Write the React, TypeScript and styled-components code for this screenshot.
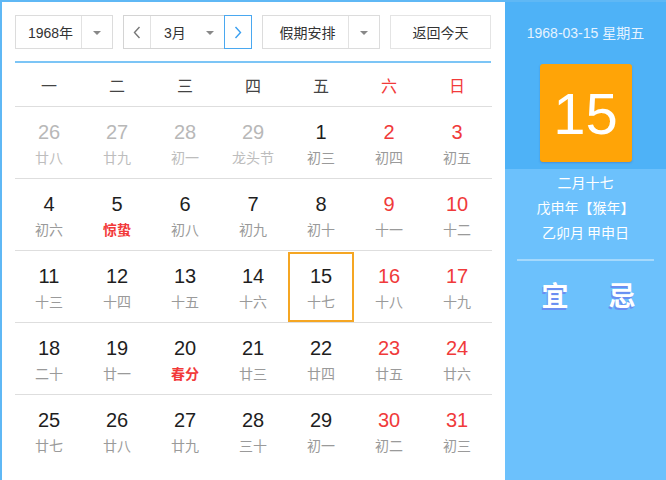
import React from 'react';
import styled, { createGlobalStyle, css } from 'styled-components';

const GlobalStyle = createGlobalStyle`
	html, body {
		margin: 0;
		padding: 0;
		background: #ffffff;
	}
	body {
		font-family: "Liberation Sans", "Noto Sans CJK SC", sans-serif;
	}
`;

type Day = {
	num: number;
	lunar: string;
	other?: boolean;
	festival?: boolean;
	selected?: boolean;
};

const weeks: Day[][] = [
	[
		{ num: 26, lunar: '廿八', other: true },
		{ num: 27, lunar: '廿九', other: true },
		{ num: 28, lunar: '初一', other: true },
		{ num: 29, lunar: '龙头节', other: true },
		{ num: 1, lunar: '初三' },
		{ num: 2, lunar: '初四' },
		{ num: 3, lunar: '初五' },
	],
	[
		{ num: 4, lunar: '初六' },
		{ num: 5, lunar: '惊蛰', festival: true },
		{ num: 6, lunar: '初八' },
		{ num: 7, lunar: '初九' },
		{ num: 8, lunar: '初十' },
		{ num: 9, lunar: '十一' },
		{ num: 10, lunar: '十二' },
	],
	[
		{ num: 11, lunar: '十三' },
		{ num: 12, lunar: '十四' },
		{ num: 13, lunar: '十五' },
		{ num: 14, lunar: '十六' },
		{ num: 15, lunar: '十七', selected: true },
		{ num: 16, lunar: '十八' },
		{ num: 17, lunar: '十九' },
	],
	[
		{ num: 18, lunar: '二十' },
		{ num: 19, lunar: '廿一' },
		{ num: 20, lunar: '春分', festival: true },
		{ num: 21, lunar: '廿三' },
		{ num: 22, lunar: '廿四' },
		{ num: 23, lunar: '廿五' },
		{ num: 24, lunar: '廿六' },
	],
	[
		{ num: 25, lunar: '廿七' },
		{ num: 26, lunar: '廿八' },
		{ num: 27, lunar: '廿九' },
		{ num: 28, lunar: '三十' },
		{ num: 29, lunar: '初一' },
		{ num: 30, lunar: '初二' },
		{ num: 31, lunar: '初三' },
	],
];

const weekdays = ['一', '二', '三', '四', '五', '六', '日'];

const Chevron = ({ dir, color }: { dir: 'left' | 'right'; color: string }) => (
	<svg width="8" height="13" viewBox="0 0 8 13">
		<polyline
			points={dir === 'left' ? '6.5,1 1.5,6.5 6.5,12' : '1.5,1 6.5,6.5 1.5,12'}
			fill="none"
			stroke={color}
			strokeWidth="1.4"
		/>
	</svg>
);

export default function App() {
	return (
		<>
			<GlobalStyle />
			<Frame>
				<Main>
					<Toolbar>
						<Select $width={98}>
							<SelectText>1968年</SelectText>
							<Caret />
						</Select>
						<MonthGroup>
							<NavButton>
								<Chevron dir="left" color="#777" />
							</NavButton>
							<MonthSelect>
								<span>3月</span>
								<SmallCaret />
							</MonthSelect>
							<NavButton $active>
								<Chevron dir="right" color="#3a9ff0" />
							</NavButton>
						</MonthGroup>
						<Select $width={118}>
							<SelectText>假期安排</SelectText>
							<Caret />
						</Select>
						<TodayButton>返回今天</TodayButton>
					</Toolbar>
					<BlueRule />
					<WeekHeader>
						{weekdays.map((w, i) => (
							<WeekName key={w} $weekend={i >= 5}>
								{w}
							</WeekName>
						))}
					</WeekHeader>
					{weeks.map((week, r) => (
						<WeekRow key={r} $last={r === weeks.length - 1}>
							{week.map((d, i) => (
								<Cell key={i} $selected={d.selected}>
									<DayNum $other={d.other} $weekend={i >= 5}>
										{d.num}
									</DayNum>
									<Lunar $other={d.other} $festival={d.festival}>
										{d.lunar}
									</Lunar>
								</Cell>
							))}
						</WeekRow>
					))}
				</Main>
				<Side>
					<SideTop>
						<DateLine>1968-03-15 星期五</DateLine>
						<BigDay>15</BigDay>
					</SideTop>
					<SideBottom>
						<LunarInfo>
							<div>二月十七</div>
							<div>戊申年【猴年】</div>
							<div>乙卯月 甲申日</div>
						</LunarInfo>
						<SideRule />
						<Advice>
							<AdviceWord>宜</AdviceWord>
							<AdviceWord>忌</AdviceWord>
						</Advice>
					</SideBottom>
				</Side>
			</Frame>
		</>
	);
}

const Frame = styled.div`
	display: flex;
	width: 666px;
	height: 480px;
	box-sizing: border-box;
	border-top: 2px solid #5fb8f5;
	border-left: 2px solid #5fb8f5;
	overflow: hidden;
`;

const Main = styled.div`
	flex: 0 0 503px;
	box-sizing: border-box;
	padding: 13px 13px 0 13px;
	background: #ffffff;
	display: flex;
	flex-direction: column;
`;

const Toolbar = styled.div`
	display: flex;
	height: 34px;
	width: 476px;
	justify-content: space-between;
	font-size: 14px;
	color: #333;
`;

const boxBorder = css`
	box-sizing: border-box;
	border: 1px solid #dcdcdc;
	background: #ffffff;
`;

const Select = styled.div<{ $width: number }>`
	${boxBorder};
	width: ${({ $width }) => $width}px;
	height: 34px;
	display: flex;
	align-items: stretch;
`;

const SelectText = styled.div`
	flex: 1;
	display: flex;
	align-items: center;
	justify-content: center;
	padding-left: 4px;
	border-right: 1px solid #e2e2e2;
`;

const Caret = styled.div`
	flex: 0 0 30px;
	position: relative;
	&::after {
		content: '';
		position: absolute;
		left: 11px;
		top: 15px;
		border-left: 4px solid transparent;
		border-right: 4px solid transparent;
		border-top: 4px solid #888;
	}
`;

const MonthGroup = styled.div`
	${boxBorder};
	width: 129px;
	height: 34px;
	display: flex;
	border-color: #d4d4d4;
`;

const NavButton = styled.div<{ $active?: boolean }>`
	flex: 0 0 27px;
	display: flex;
	align-items: center;
	justify-content: center;
	box-sizing: border-box;
	${({ $active }) =>
		$active
			? css`
					border: 1px solid #4aa8f0;
					margin: -1px -1px -1px 0;
					flex-basis: 28px;
			  `
			: css`
					border-right: 1px solid #e2e2e2;
			  `}
`;

const MonthSelect = styled.div`
	flex: 1;
	display: flex;
	align-items: center;
	padding-left: 13px;
	position: relative;
`;

const SmallCaret = styled.span`
	position: absolute;
	right: 10px;
	top: 15px;
	border-left: 4px solid transparent;
	border-right: 4px solid transparent;
	border-top: 4px solid #888;
`;

const TodayButton = styled.div`
	${boxBorder};
	width: 101px;
	height: 34px;
	display: flex;
	align-items: center;
	justify-content: center;
	border-color: #e4e4e4;
`;

const BlueRule = styled.div`
	width: 476px;
	height: 2px;
	margin-top: 12px;
	background: #7cc5f6;
`;

const WeekHeader = styled.div`
	display: grid;
	grid-template-columns: repeat(7, 68px);
	height: 43px;
	border-bottom: 1px solid #dedede;
	align-items: center;
	font-family: "Noto Sans CJK SC", sans-serif;
	font-size: 16px;
`;

const WeekName = styled.div<{ $weekend?: boolean }>`
	text-align: center;
	color: ${({ $weekend }) => ($weekend ? '#f23a3a' : '#444')};
`;

const WeekRow = styled.div<{ $last?: boolean }>`
	display: grid;
	grid-template-columns: repeat(7, 68px);
	height: 72px;
	box-sizing: border-box;
	border-bottom: ${({ $last }) => ($last ? 'none' : '1px solid #dedede')};
`;

const Cell = styled.div<{ $selected?: boolean }>`
	margin: 1px 1px 0 1px;
	box-sizing: border-box;
	border: 2px solid ${({ $selected }) => ($selected ? '#f5a623' : 'transparent')};
	display: flex;
	flex-direction: column;
	align-items: center;
	padding-top: 10px;
`;

const DayNum = styled.div<{ $other?: boolean; $weekend?: boolean }>`
	font-family: "Liberation Sans", sans-serif;
	font-size: 20px;
	line-height: 24px;
	color: ${({ $other, $weekend }) => ($other ? '#b8b8b8' : $weekend ? '#f03a3a' : '#1e1e1e')};
`;

const Lunar = styled.div<{ $other?: boolean; $festival?: boolean }>`
	font-family: "Noto Sans CJK SC", sans-serif;
	font-size: 14px;
	line-height: 20px;
	margin-top: 3px;
	color: ${({ $other, $festival }) => ($festival ? '#f23a3a' : $other ? '#bdbdbd' : '#9a9a9a')};
	font-weight: ${({ $festival }) => ($festival ? 700 : 400)};
`;

const Side = styled.div`
	flex: 1;
	display: flex;
	flex-direction: column;
`;

const SideTop = styled.div`
	height: 167px;
	background: #4eb2f7;
	display: flex;
	flex-direction: column;
	align-items: center;
`;

const DateLine = styled.div`
	margin-top: 22px;
	font-size: 14px;
	line-height: 18px;
	color: #e6f3ff;
`;

const BigDay = styled.div`
	margin-top: 22px;
	width: 92px;
	height: 98px;
	border-radius: 3px;
	background: #ffa407;
	box-shadow: 0 1px 2px rgba(60, 80, 160, 0.35);
	color: #ffffff;
	font-family: "Liberation Sans", sans-serif;
	font-size: 58px;
	display: flex;
	align-items: center;
	justify-content: center;
`;

const SideBottom = styled.div`
	flex: 1;
	background: #6cc1fc;
	display: flex;
	flex-direction: column;
	align-items: center;
	padding-top: 1px;
`;

const LunarInfo = styled.div`
	font-family: "Noto Sans CJK SC", sans-serif;
	font-size: 14px;
	line-height: 25px;
	color: #ffffff;
	text-align: center;
`;

const SideRule = styled.div`
	width: 137px;
	height: 2px;
	margin-top: 14px;
	background: #a5d9fc;
`;

const Advice = styled.div`
	display: flex;
	gap: 40px;
	margin-top: 17px;
	margin-left: 6px;
`;

const AdviceWord = styled.div`
	font-family: "Noto Sans CJK SC", sans-serif;
	font-size: 27px;
	font-weight: 700;
	line-height: 34px;
	color: #ffffff;
	text-shadow: -1px 2px 0 #6b8ef2;
`;
